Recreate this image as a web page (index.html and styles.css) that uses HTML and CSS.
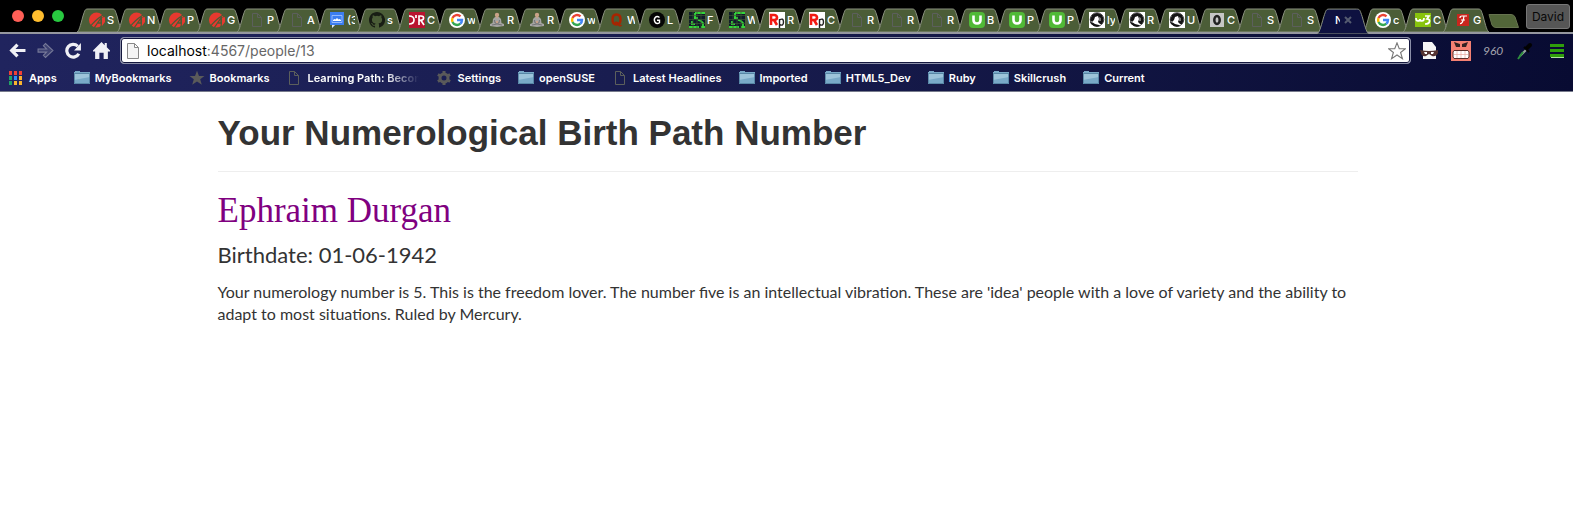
FILE: index.html
```html
<!DOCTYPE html>
<html lang="en">
<head>
<meta charset="utf-8">
<title>Your Numerological Birth Path Number</title>
<link rel="stylesheet" href="styles.css">
</head>
<body>
<svg class="defs" aria-hidden="true">
  <symbol id="shape" viewBox="0 0 46 24" preserveAspectRatio="none"><path d="M0 24C2 23 3 19 6 8C8 2 8 1 11 1H35C38 1 38 2 40 8C43 19 44 23 46 24Z" stroke="#8b9280" vector-effect="non-scaling-stroke"/></symbol>
  <symbol id="rails" viewBox="0 0 16 16"><circle cx="7.500" cy="8" r="7.500" fill="#e8392f"/><path fill="none" stroke="#4b5d37" stroke-width="1.300" d="M1 15Q5 9 14 3M5 16L12 6V11H9M13 5L12 15"/><path fill="#e8392f" d="M13 6L16 5V10L13 14Z"/></symbol>
  <symbol id="page" viewBox="0 0 16 16"><path fill="none" stroke="#5c5f5c" d="M3.500 1.500H8.500L12.500 5.500V14.500H3.500ZM8.500 1.500V5.500H12.500"/></symbol>
  <symbol id="pagew" viewBox="0 0 16 16"><path fill="#f4f4f4" stroke="#888" d="M2.500.5H9.500L13.500 4.500V15.500H2.500ZM9.500.5V4.500H13.500"/></symbol>
  <symbol id="groups" viewBox="0 0 16 16"><path fill="#3b7df0" d="M1 0H15V13H6L3 16V13H1Z"/><path fill="#e8e8e8" d="M3 13H6L3 16Z"/><path fill="none" stroke="#a9c8ff" stroke-width=".8" d="M3 3.500H13V10.500H3Z"/><path fill="#fff" d="M4 9H12V8L10.500 7L9.500 7.500L8 6L6.500 7.500L5.500 7L4 8Z"/></symbol>
  <symbol id="github" viewBox="0 0 16 16"><path fill="#181d14" d="M8 0C3.580 0 0 3.580 0 8c0 3.540 2.290 6.530 5.470 7.590.4.070.55-.17.55-.38v-1.490c-2.010.37-2.530-.49-2.690-.94-.09-.23-.48-.94-.82-1.130-.28-.15-.68-.52-.01-.53.63-.01 1.080.58 1.230.82.72 1.210 1.870.87 2.330.66.07-.52.28-.87.51-1.070-1.780-.2-3.640-.89-3.640-3.950 0-.87.31-1.590.82-2.150-.08-.2-.36-1.020.08-2.120 0 0 .67-.21 2.200.82a7.600 7.600 0 0 1 4 0c1.530-1.040 2.200-.82 2.200-.82.44 1.100.16 1.920.08 2.120.51.56.82 1.270.82 2.150 0 3.070-1.870 3.750-3.650 3.950.29.25.54.73.54 1.480v2.200c0 .21.15.46.55.38A8 8 0 0 0 8 0Z"/></symbol>
  <symbol id="oreilly" viewBox="0 0 16 16"><path fill="#b9132f" d="M0 0H16V16H0Z"/><path fill="none" stroke="#fff" stroke-width="1.700" d="M0 4Q5 4 5 8T0 12M7 3V6M10 13V4H12Q15 4 14.500 6.500Q14 8.500 10 8.500M12 8.500L15 13"/></symbol>
  <symbol id="google" viewBox="0 0 16 16"><circle cx="8" cy="8" r="8" fill="#fff"/><g fill="none" stroke-width="2.400"><path stroke="#ea4335" d="M3.500 6A5 5 0 0 1 11.500 4.300"/><path stroke="#fbbc05" d="M3.500 10A5 5 0 0 1 3.500 6"/><path stroke="#34a853" d="M3.500 10A5 5 0 0 0 11.300 11.700"/><path stroke="#4285f4" d="M8 8H13Q13 10.500 11.300 11.700"/></g></symbol>
  <symbol id="buddha" viewBox="0 0 16 16"><path fill="#a5a5a3" d="M6 5H10L12 7L12.500 11L15 12V14L8 15L1 14V12L3.500 11L4 7Z"/><circle cx="8" cy="3" r="2.200" fill="#c9a288"/><path fill="none" stroke="#6e6e70" stroke-width=".9" d="M5.500 8L6 11H10L10.500 8M3 13L8 12L13 13"/><path fill="#c9a288" d="M7 9H9V11H7ZM7 5H9L8 7Z"/></symbol>
  <symbol id="quora" viewBox="0 0 16 16"><path fill="none" stroke="#a82400" stroke-width="2.400" d="M7.500 2.500C4.500 2.500 3.500 4 3.500 7.500S4.500 12.500 7.500 12.500S11.500 11 11.500 7.500S10.500 2.500 7.500 2.500Z"/><path fill="none" stroke="#a82400" stroke-width="1.500" d="M6 10.500Q8.500 9.500 9.500 12.500Q10.500 15 12.500 13"/></symbol>
  <symbol id="gee" viewBox="0 0 16 16"><circle cx="8" cy="8" r="8" fill="#050505"/><path fill="none" stroke="#fff" stroke-width="1.400" d="M10.500 5.500Q8 3.500 6.200 5.500T6.200 10.500Q8 12.500 10.500 10.700V8.300H8"/></symbol>
  <symbol id="grid" viewBox="0 0 16 16"><path fill="#101c2a" d="M0 0H16V16H0Z"/><path stroke="#34d63a" stroke-width="1.800" fill="none" d="M0 15H10M12 15H16M6 1H16M6 1V5M5 6H9M9 8L12 9L14 11V14M3 9V12H6"/><path stroke="#3d5733" stroke-width=".7" fill="none" d="M0 3.500H16M0 7.500H16M0 11.500H16M4 0V16M8 0V16M12 0V16"/></symbol>
  <symbol id="rp" viewBox="0 0 16 16"><path fill="#fff" d="M0 0H16V16H0Z"/><path fill="none" stroke="#f21b12" stroke-width="2.600" d="M2 13V3H5Q8 3 8 5.500T5 8H3M5 8L8 13"/><path fill="none" stroke="#222" stroke-width="1.400" d="M10.500 16V7M10.500 8Q14.500 5.500 14.500 10T10.500 12.500"/></symbol>
  <symbol id="udemy" viewBox="0 0 16 16"><rect width="16" height="16" rx="4" fill="#50b936"/><path fill="none" stroke="#fff" stroke-width="2.600" d="M4.500 3.500V8Q4.500 11.500 8 11.500T11.500 8V3.500"/></symbol>
  <symbol id="face" viewBox="0 0 16 16"><path fill="#fff" d="M0 0H16V16H0Z"/><circle cx="8" cy="7.500" r="6.800" fill="#fff" stroke="#222" stroke-width=".8"/><path fill="#151515" d="M3 3Q8-1 13 3Q16 8 13 12L11 12L9 10L10 7L9 4L6 5L5 8L3 10L1 8ZM1 10Q4 10 6 12L10 13L11 14Q6 16 2 12Z"/><path fill="#777" d="M10 5L12 6L12 9L10 9Z"/></symbol>
  <symbol id="zero" viewBox="0 0 16 16"><path fill="#c6c6c6" d="M1 1H15V15H1Z"/><ellipse cx="8" cy="8" rx="2.700" ry="4" fill="none" stroke="#222" stroke-width="2.500"/></symbol>
  <symbol id="w3" viewBox="0 0 16 16"><path fill="#88c40d" d="M0 1H16V15H0Z"/><path fill="none" stroke="#fff" stroke-width="1.700" d="M1 6Q1 9 3 9T5 7Q5 9 7 9T9 6M10 4H14L12 7Q15 7 14.500 9.500T10 12"/></symbol>
  <symbol id="eff" viewBox="0 0 16 16"><path fill="#c9261d" d="M2 2H14V14H2Z"/><path fill="none" stroke="#fff" stroke-width="1.200" d="M5 6Q5 4 7 4H12M9 4Q8 12 5 11.500M6 8H10"/></symbol>
  <symbol id="folder" viewBox="0 0 16 14"><path fill="#79a9c7" d="M1 0H6V1H16V13H0V1H1Z"/><path fill="#9dc4da" d="M0 3H16V6L0 9Z"/><path fill="none" stroke="#4f7f9d" stroke-width=".8" d="M.5 2.500H15.500V12.500H.5Z"/></symbol>
  <symbol id="star" viewBox="0 0 16 16"><path d="M8 .8L10 6H15.500L11.200 9.300L12.800 14.800L8 11.500L3.200 14.800L4.800 9.300L.5 6H6Z"/></symbol>
</svg>
<header class="browser">
  <div class="strip">
    <div class="lights"><i class="light red"></i><i class="light amber"></i><i class="light green"></i></div>
    <nav class="tabs" aria-label="Tabs">
      <a class="tab" href="#"><svg class="shape"><use href="#shape"/></svg><svg class="fav"><use href="#rails"/></svg><span>S</span></a>
      <a class="tab" href="#"><svg class="shape"><use href="#shape"/></svg><svg class="fav"><use href="#rails"/></svg><span>N</span></a>
      <a class="tab" href="#"><svg class="shape"><use href="#shape"/></svg><svg class="fav"><use href="#rails"/></svg><span>P</span></a>
      <a class="tab" href="#"><svg class="shape"><use href="#shape"/></svg><svg class="fav"><use href="#rails"/></svg><span>G</span></a>
      <a class="tab" href="#"><svg class="shape"><use href="#shape"/></svg><svg class="fav"><use href="#page"/></svg><span>P</span></a>
      <a class="tab" href="#"><svg class="shape"><use href="#shape"/></svg><svg class="fav"><use href="#page"/></svg><span>A</span></a>
      <a class="tab" href="#"><svg class="shape"><use href="#shape"/></svg><svg class="fav"><use href="#groups"/></svg><span>(3</span></a>
      <a class="tab" href="#"><svg class="shape"><use href="#shape"/></svg><svg class="fav"><use href="#github"/></svg><span>s</span></a>
      <a class="tab" href="#"><svg class="shape"><use href="#shape"/></svg><svg class="fav"><use href="#oreilly"/></svg><span>C</span></a>
      <a class="tab" href="#"><svg class="shape"><use href="#shape"/></svg><svg class="fav"><use href="#google"/></svg><span>w</span></a>
      <a class="tab" href="#"><svg class="shape"><use href="#shape"/></svg><svg class="fav"><use href="#buddha"/></svg><span>R</span></a>
      <a class="tab" href="#"><svg class="shape"><use href="#shape"/></svg><svg class="fav"><use href="#buddha"/></svg><span>R</span></a>
      <a class="tab" href="#"><svg class="shape"><use href="#shape"/></svg><svg class="fav"><use href="#google"/></svg><span>w</span></a>
      <a class="tab" href="#"><svg class="shape"><use href="#shape"/></svg><svg class="fav"><use href="#quora"/></svg><span>W</span></a>
      <a class="tab" href="#"><svg class="shape"><use href="#shape"/></svg><svg class="fav"><use href="#gee"/></svg><span>L</span></a>
      <a class="tab" href="#"><svg class="shape"><use href="#shape"/></svg><svg class="fav"><use href="#grid"/></svg><span>F</span></a>
      <a class="tab" href="#"><svg class="shape"><use href="#shape"/></svg><svg class="fav"><use href="#grid"/></svg><span>W</span></a>
      <a class="tab" href="#"><svg class="shape"><use href="#shape"/></svg><svg class="fav"><use href="#rp"/></svg><span>R</span></a>
      <a class="tab" href="#"><svg class="shape"><use href="#shape"/></svg><svg class="fav"><use href="#rp"/></svg><span>C</span></a>
      <a class="tab" href="#"><svg class="shape"><use href="#shape"/></svg><svg class="fav"><use href="#page"/></svg><span>R</span></a>
      <a class="tab" href="#"><svg class="shape"><use href="#shape"/></svg><svg class="fav"><use href="#page"/></svg><span>R</span></a>
      <a class="tab" href="#"><svg class="shape"><use href="#shape"/></svg><svg class="fav"><use href="#page"/></svg><span>R</span></a>
      <a class="tab" href="#"><svg class="shape"><use href="#shape"/></svg><svg class="fav"><use href="#udemy"/></svg><span>B</span></a>
      <a class="tab" href="#"><svg class="shape"><use href="#shape"/></svg><svg class="fav"><use href="#udemy"/></svg><span>P</span></a>
      <a class="tab" href="#"><svg class="shape"><use href="#shape"/></svg><svg class="fav"><use href="#udemy"/></svg><span>P</span></a>
      <a class="tab" href="#"><svg class="shape"><use href="#shape"/></svg><svg class="fav"><use href="#face"/></svg><span>ly</span></a>
      <a class="tab" href="#"><svg class="shape"><use href="#shape"/></svg><svg class="fav"><use href="#face"/></svg><span>R</span></a>
      <a class="tab" href="#"><svg class="shape"><use href="#shape"/></svg><svg class="fav"><use href="#face"/></svg><span>U</span></a>
      <a class="tab" href="#"><svg class="shape"><use href="#shape"/></svg><svg class="fav"><use href="#zero"/></svg><span>C</span></a>
      <a class="tab" href="#"><svg class="shape"><use href="#shape"/></svg><svg class="fav"><use href="#page"/></svg><span>S</span></a>
      <a class="tab" href="#"><svg class="shape"><use href="#shape"/></svg><svg class="fav"><use href="#page"/></svg><span>S</span></a>
      <a class="tab active" href="#"><svg class="shape"><use href="#shape"/></svg><span>N</span><svg class="close" viewBox="0 0 8 8"><path d="M1 1L7 7M7 1L1 7"/></svg></a>
      <a class="tab" href="#"><svg class="shape"><use href="#shape"/></svg><svg class="fav"><use href="#google"/></svg><span>c</span></a>
      <a class="tab" href="#"><svg class="shape"><use href="#shape"/></svg><svg class="fav"><use href="#w3"/></svg><span>C</span></a>
      <a class="tab" href="#"><svg class="shape"><use href="#shape"/></svg><svg class="fav"><use href="#eff"/></svg><span>G</span></a>
    </nav>
    <button class="newtab" aria-label="New tab"><svg viewBox="0 0 32 14"><path d="M1 .5H23Q26 .5 27 3L30.500 13.500H8Q5 13.500 4 11Z"/></svg></button>
    <button class="profile">David</button>
  </div>
  <div class="toolbar">
    <button class="tool" aria-label="Back"><svg viewBox="0 0 16 16"><path class="line" d="M15.500 8H3M8 2.500L2.500 8L8 13.500"/></svg></button>
    <button class="tool dim" aria-label="Forward"><svg viewBox="0 0 16 16"><path d="M1 6.500H9L6 3.500L8 1.500L15 8L8 14.500L6 12.500L9 9.500H1Z"/></svg></button>
    <button class="tool" aria-label="Reload"><svg viewBox="0 0 16 16"><path class="line" d="M13 11A6 6 0 1 1 12 4"/><path d="M15 1V8H8.500Z"/></svg></button>
    <button class="tool" aria-label="Home"><svg viewBox="0 0 16 16"><path d="M0 8L8 0L11 3V1H13V5L16 8V9H14V16H10V10H6V16H2V9H0Z"/></svg></button>
    <div class="address">
      <svg class="fav"><use href="#pagew"/></svg>
      <div class="url" role="textbox" aria-label="Address"><b>localhost</b>:4567/people/13</div>
      <button class="fave" aria-label="Bookmark this page"><svg viewBox="0 0 16 16"><use href="#star"/></svg></button>
    </div>
    <div class="extensions">
      <button class="ext" aria-label="Mask"><svg viewBox="0 0 20 20"><path fill="#f5f5f5" d="M4 1H13L17 6V18H4Z"/><path fill="#553331" d="M1 9Q10 11 19 9V12Q17 16 13 15L10 13L7 15Q3 16 2 12Z"/><path fill="#fff" d="M5 11H8V13H6ZM12 11H15L14 13H12Z"/></svg></button>
      <button class="ext" aria-label="Grimace"><svg viewBox="0 0 20 20"><path fill="#f48072" d="M0 0H20V20H0Z"/><path fill="#332222" d="M3 1L9 3V6H5ZM17 1L11 3V6H15Z"/><path fill="#fff" stroke="#5a2f2b" d="M3 9.500H17L18 11V16L17 17.500H3L2 16V11Z"/><path fill="none" stroke="#e9a79f" stroke-width=".7" d="M3 13.500H17M6 10V17M10 10V17M14 10V17"/></svg></button>
      <button class="ext grid960">960</button>
      <button class="ext" aria-label="Colour picker"><svg viewBox="0 0 20 20"><path stroke="#9aa8a0" stroke-width="2" d="M5 15L12 8"/><path stroke="#2d8f3c" stroke-width="2" d="M3 18L8 11"/><path stroke="#020202" stroke-width="4" stroke-linecap="round" d="M12 7L15 4"/><path stroke="#020202" stroke-width="2" d="M9 6L14 11"/></svg></button>
      <button class="ext" aria-label="Menu"><svg viewBox="0 0 20 20"><path fill="#aee39d" d="M4 3H17V6H4ZM4 8H17V11H4ZM4 13H17V17H4Z"/><path fill="#2f9e0b" d="M3 3H17V6H3ZM3 8H17V11H3ZM3 13H17V16H3Z"/></svg></button>
    </div>
  </div>
  <nav class="bookmarks" aria-label="Bookmarks">
    <a href="#"><svg class="apps" viewBox="0 0 13 14"><path fill="#ef4136" d="M0 0H3V4H0ZM5 0H8V4H5ZM10 0H13V4H10Z"/><path fill="#21a366" d="M0 5H3V9H0ZM0 10H3V14H0Z"/><path fill="#2f8df5" d="M5 5H8V9H5Z"/><path fill="#f9b32f" d="M10 5H13V9H10ZM5 10H8V14H5ZM10 10H13V14H10Z"/></svg>Apps</a>
    <a href="#"><svg class="fav"><use href="#folder"/></svg>MyBookmarks</a>
    <a href="#"><svg class="fav gray"><use href="#star"/></svg>Bookmarks</a>
    <a href="#"><svg class="fav"><use href="#page"/></svg><span class="fade">Learning Path: Becom</span></a>
    <a href="#"><svg class="fav gray" viewBox="0 0 16 16"><circle cx="8" cy="8" r="4" fill="none" stroke="#5a5a5a" stroke-width="3"/><path stroke="#5a5a5a" stroke-width="3" d="M8 1V3M8 13V15M1.900 4.500L3.700 5.500M12.300 10.500L14.100 11.500M1.900 11.500L3.700 10.500M12.300 5.500L14.100 4.500"/></svg>Settings</a>
    <a href="#"><svg class="fav"><use href="#folder"/></svg>openSUSE</a>
    <a href="#"><svg class="fav"><use href="#page"/></svg>Latest Headlines</a>
    <a href="#"><svg class="fav"><use href="#folder"/></svg>Imported</a>
    <a href="#"><svg class="fav"><use href="#folder"/></svg>HTML5_Dev</a>
    <a href="#"><svg class="fav"><use href="#folder"/></svg>Ruby</a>
    <a href="#"><svg class="fav"><use href="#folder"/></svg>Skillcrush</a>
    <a href="#"><svg class="fav"><use href="#folder"/></svg>Current</a>
  </nav>
</header>
<main class="container">
  <h1>Your Numerological Birth Path Number</h1>
  <hr>
  <h2>Ephraim Durgan</h2>
  <h3>Birthdate: 01-06-1942</h3>
  <p>Your numerology number is 5. This is the freedom lover. The number five is an intellectual vibration. These are 'idea' people with a love of variety and the ability to adapt to most situations. Ruled by Mercury.</p>
</main>
</body>
</html>
```
FILE: styles.css
```css
* { box-sizing: border-box; }
body { margin: 0; background: #fff; color: #333; font-family: Lato, "Open Sans", sans-serif; }
button { margin: 0; padding: 0; border: 0; background: none; font: inherit; color: inherit; }
a { color: inherit; text-decoration: none; }
svg { display: block; flex: none; }
.defs { position: absolute; width: 0; height: 0; }
.browser { color: #fff; font-family: Inter, "Liberation Sans", sans-serif; background: linear-gradient(90deg, #20245e, #171b4c 50%, #080b32); border-bottom: 1px solid #777b8c; }
.strip { display: flex; align-items: flex-end; height: 34px; background: #000; border-bottom: 2px solid #95979f; }
.lights { display: flex; gap: 8px; width: 77px; padding: 0 0 10px 12px; flex: none; }
.light { width: 12px; height: 12px; border-radius: 50%; }
.red { background: #ff5f57; }
.amber { background: #ffbd2e; }
.green { background: #28c940; }
.tabs { display: flex; flex: 1; min-width: 0; }
.tab { position: relative; display: flex; align-items: center; gap: 2px; flex: 1 1 0; min-width: 0; height: 24px; padding-left: 12px; font-size: 11px; font-weight: 500; }
.shape { position: absolute; left: 0; top: 0; width: calc(100% + 6px); height: 24px; fill: #4b5d37; }
.fav { position: relative; width: 16px; height: 16px; }
.tab span { position: relative; width: 8px; overflow: hidden; white-space: nowrap; }
.active { z-index: 1; gap: 4px; padding-left: 18px; }
.active .shape { height: 26px; fill: #0e1140; }
.active span { width: 5px; }
.close { position: relative; width: 8px; height: 8px; stroke: #555b70; stroke-width: 2; }
.newtab { width: 32px; margin: 0 6px 4px 5px; flex: none; }
.newtab svg { width: 32px; height: 14px; fill: #526639; stroke: #66734f; }
.profile { width: 44px; height: 25px; margin: 0 3px 3px 0; border: 1px solid #777; border-radius: 3px; background: #565656; color: #080808; font-size: 12px; flex: none; }
.toolbar { display: flex; align-items: center; height: 33px; padding: 0 6px 0 9px; }
.tool { width: 28px; flex: none; }
.tool svg { width: 17px; height: 17px; fill: #f0f0f5; }
.line { fill: none; stroke: #f0f0f5; stroke-width: 3; }
.dim svg { fill: #3e4272; stroke: #777a99; }
.address { display: flex; align-items: center; flex: 1; min-width: 0; height: 27px; margin-left: -1px; padding: 0 4px; border: 1px solid #8b8fa8; box-shadow: inset 0 0 0 1px #15183e; border-radius: 4px; background: #fff; color: #666; }
.url { flex: 1; padding-left: 6px; font-size: 14px; line-height: 20px; }
.url b { color: #000; font-weight: 400; }
.fave svg { width: 18px; height: 18px; fill: #fff; stroke: #777; }
.extensions { display: flex; align-items: center; gap: 12px; padding-left: 8px; }
.ext { width: 20px; height: 20px; flex: none; }
.ext svg { width: 20px; height: 20px; }
.grid960 { color: #a4a4ad; font-family: Lato, sans-serif; font-size: 12px; font-style: italic; }
.bookmarks { display: flex; align-items: center; gap: 17px; height: 24px; padding: 0 9px 2px; font-size: 11px; font-weight: 600; white-space: nowrap; }
.bookmarks a { display: flex; align-items: center; gap: 5px; }
.apps { width: 13px; height: 14px; margin-right: 2px; }
.gray { fill: #5a5a5a; }
.fade { width: 112px; overflow: hidden; mask-image: linear-gradient(90deg, #000 70%, transparent); }
.container { max-width: 1170px; margin: 0 auto; padding: 20px 14px 20px 16px; }
h1 { margin: 0; font: 700 35px/42px "Liberation Sans", Arial, sans-serif; }
hr { margin: 17px 0 20px; border: 0; border-top: 1px solid #eee; }
h2 { margin: 0; color: #800080; font: 400 35px/38px "Liberation Serif", "Times New Roman", serif; }
h3 { margin: 12px 0 13px; font-size: 22px; font-weight: 400; line-height: 26px; }
p { margin: 0; font-size: 16px; line-height: 22px; }
```
